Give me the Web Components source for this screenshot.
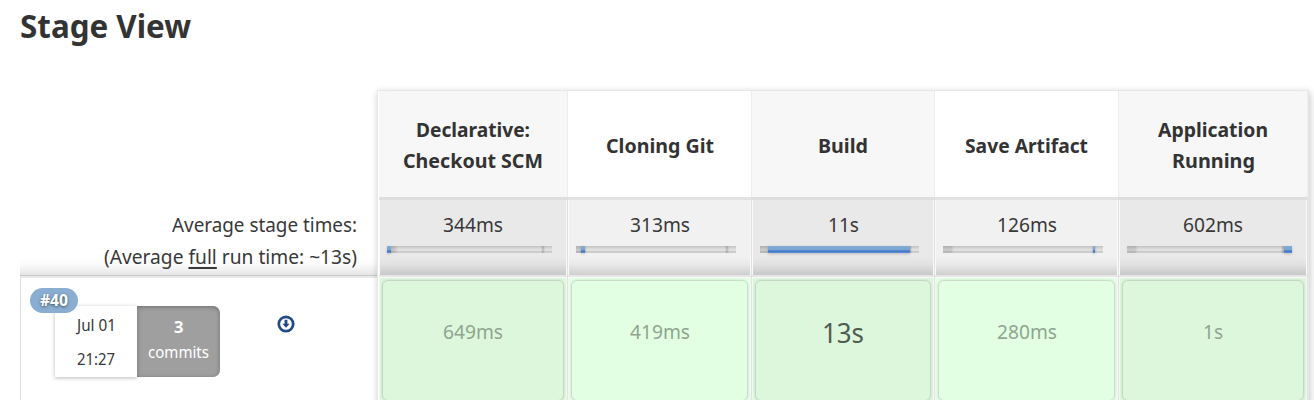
<!DOCTYPE html>
<html lang="en">
<head>
<meta charset="utf-8">
<title>Stage View</title>
<style>
html,body{margin:0;background:#fff;height:400px;overflow:hidden}
body{font-family:"Noto Sans","Open Sans",sans-serif;color:#383838}
</style>
</head>
<body>
<stage-view></stage-view>
<script>
const define = (name, html, setup) => {
  const tpl = document.createElement('template');
  tpl.innerHTML = html;
  customElements.define(name, class extends HTMLElement {
    constructor() {
      super();
      this.attachShadow({mode: 'open'}).appendChild(tpl.content.cloneNode(true));
    }
    connectedCallback() { if (setup) setup(this, this.shadowRoot); }
  });
};

// A single line of text condensed so that it takes the given width.
define('fit-text', `
<style>:host{display:block;white-space:nowrap}span{display:inline-block;transform-origin:0 50%}</style>
<span><slot></slot></span>`, (el, root) => {
  const span = root.querySelector('span');
  const target = parseFloat(el.getAttribute('w'));
  const natural = span.getBoundingClientRect().width;
  span.style.transform = 'scaleX(' + (target / natural).toFixed(4) + ')';
  el.style.width = target + 'px';
});

define('stage-header', `
<style>
:host{display:flex;flex-direction:column;justify-content:center;align-items:center;box-sizing:border-box;height:106px;
 padding-top:2px;border-right:1px solid #ededed;background:var(--head);color:#333;font-size:20px;line-height:31px;font-weight:700}
</style><slot></slot>`);

define('stage-average', `
<style>
:host{display:block;box-sizing:border-box;height:81px;border-top:3px solid var(--line);border-right:1px solid #dfdfdf;
 padding:0 1px 3px;background:linear-gradient(to bottom,#fafafa 75px,#e6e6e6 75px 77px,#fafafa 77px)}
.in{box-sizing:border-box;height:75px;padding:1px 0 0;background:linear-gradient(to bottom,transparent 56px,rgba(0,0,0,.03) 64px,rgba(0,0,0,.14) 75px),var(--avg);
 display:flex;flex-direction:column;align-items:center;font-size:20px;line-height:48px}
.bar{align-self:flex-start;margin:-3px 0 0 7px;width:var(--bw);height:7px;display:flex;
 background:linear-gradient(to right,rgba(0,0,0,.10) 0 8px,transparent 11px calc(100% - 11px),rgba(0,0,0,.18) calc(100% - 9px),transparent calc(100% - 7px)),
 linear-gradient(#bfbfbf,#d2d2d2 25%,#e2e2e2 55%,#dfdfdf 70%,#c9c9c9 75%,#cfcfcf)}
.bar i{display:block;margin-left:var(--from);width:var(--len);height:7px;box-shadow:0 1px 3px rgba(0,0,0,.2);
 background:linear-gradient(#82abd5 0,#79a4d4 60%,#3a70c6 68%,#477ccd 84%,#6498dd)}
</style>
<div class="in"><slot></slot><div class="bar"><i></i></div></div>`, (el) => {
  const [w, from, len] = el.getAttribute('bar').split(' ');
  el.style.setProperty('--bw', w + 'px');
  el.style.setProperty('--from', from + 'px');
  el.style.setProperty('--len', len + 'px');
});

define('stage-cell', `
<style>
:host{display:block;box-sizing:border-box;height:126px;border-right:1px solid #e3e3e3;padding:0 1px;background:#f5f5f5}
.pad{background:var(--ok);padding:2px;height:122px}
.in{box-sizing:border-box;height:121px;border:1px solid var(--edge);border-radius:6px;box-shadow:0 0 2px rgba(0,0,0,.16);
 display:flex;justify-content:center;font-size:20px;line-height:102px;color:#8fa58f}
:host([long]) .in{font-size:28px;color:#4f5c4f;line-height:103px}
</style>
<div class="pad"><div class="in"><slot></slot></div></div>`);

define('stage-column', `
<style>
:host{display:block;--head:#fff;--avg:#f1f1f1;--ok:#e3ffe3;--line:#e3e3e3;--edge:#cbdccb}
:host([odd]){--head:#f7f7f7;--avg:#e9e9e9;--ok:#ddf7dd;--line:#dedede;--edge:#c5d7c5}
</style><slot></slot>`);

define('run-badge', `
<style>
:host{position:absolute;left:-25px;top:-18px;width:48px;height:25px;border-radius:13px;background:#8aaed2;
 color:#fff;font-size:16px;font-weight:700;line-height:25px;display:flex;justify-content:center;text-shadow:0 1px 3px rgba(0,0,0,.55)}
</style><slot></slot>`);

define('down-icon', `
<style>:host{display:block;width:18px;height:18px}svg{display:block}</style>
<svg width="18" height="18" viewBox="0 0 18 18"><circle cx="9" cy="9" r="7.2" fill="#fff" stroke="#204a87" stroke-width="2.7"/>
<path d="M7.6 4.7h2.8v4.1h2.2L9 12.8 5.4 8.8h2.2z" fill="#204a87"/></svg>`);

define('run-summary', `
<style>
:host{display:flex;align-items:flex-start;box-sizing:border-box;height:125px;border-left:1px solid #dedede;padding:28px 0 0 34px}
.card{position:relative;display:flex;height:71px;font-size:16px}
.date{width:82px;background:#fff;box-shadow:0 1px 4px rgba(0,0,0,.28);display:flex;flex-direction:column;align-items:center;line-height:34px;padding-top:2px;box-sizing:border-box}
.commits{width:83px;box-sizing:border-box;background:#9f9f9f;color:#fff;border-radius:0 7px 7px 0;box-shadow:inset 0 1px 4px rgba(0,0,0,.3);
 display:flex;flex-direction:column;align-items:center;padding-top:9px;line-height:25px;position:relative}
.n{font-weight:700}
down-icon{margin:9px 0 0 57px}
</style>
<div class="card">
 <div class="date"><fit-text w="39">Jul 01</fit-text><fit-text w="38">21:27</fit-text></div>
 <div class="commits"><fit-text class="n" w="9.5">3</fit-text><fit-text w="61">commits</fit-text></div>
 <run-badge><fit-text w="28">#40</fit-text></run-badge>
</div>
<down-icon></down-icon>`);

define('run-side', `
<style>
:host{display:block;width:357px;padding-top:103px}
.avg{box-sizing:border-box;height:86px;padding:19px 20px 0 0;display:flex;flex-direction:column;align-items:flex-end;font-size:20px;line-height:32px;
 border-bottom:1px solid #c8c8c8;background:linear-gradient(to bottom,transparent 68px,rgba(0,0,0,.02) 75px,rgba(0,0,0,.1) 85px)}
.gap{height:2px;background:#e9e9e9}
u{text-decoration-thickness:1.5px;text-underline-offset:3px}
</style>
<div class="avg"><fit-text w="185">Average stage times:</fit-text><fit-text w="253">(Average <u>full</u> run time: ~13s)</fit-text></div>
<div class="gap"></div>
<run-summary></run-summary>`);

define('stage-table', `
<style>
:host{display:grid;grid-template-columns:189px 184px 183px 184px 189px;box-sizing:border-box;height:320px;border:1px solid #e8e8e8;border-width:1px 1px 0;padding-left:1px;background:#fff;
 box-shadow:1px 2px 7px rgba(0,0,0,.22)}
</style><slot></slot>`);

define('stage-view', `
<style>
:host{display:block;height:400px;overflow:hidden;padding-left:20px;box-sizing:border-box}
h2{margin:0;height:87px;font-size:33px;line-height:52px;font-weight:700;color:#333}
.body{display:flex;align-items:flex-start}
stage-table{margin-top:3px}
</style>
<h2><fit-text w="171">Stage View</fit-text></h2>
<div class="body">
<run-side></run-side>
<stage-table>
 <stage-column odd>
  <stage-header><fit-text w="114">Declarative:</fit-text><fit-text w="140">Checkout SCM</fit-text></stage-header>
  <stage-average bar="165 0 4"><fit-text w="60">344ms</fit-text></stage-average>
  <stage-cell><fit-text w="60">649ms</fit-text></stage-cell>
 </stage-column>
 <stage-column>
  <stage-header><fit-text w="108">Cloning Git</fit-text></stage-header>
  <stage-average bar="160 5 4"><fit-text w="60">313ms</fit-text></stage-average>
  <stage-cell><fit-text w="60">419ms</fit-text></stage-cell>
 </stage-column>
 <stage-column odd>
  <stage-header><fit-text w="50">Build</fit-text></stage-header>
  <stage-average bar="159 8 142"><fit-text w="31">11s</fit-text></stage-average>
  <stage-cell long><fit-text w="42">13s</fit-text></stage-cell>
 </stage-column>
 <stage-column>
  <stage-header><fit-text w="123">Save Artifact</fit-text></stage-header>
  <stage-average bar="160 150 2"><fit-text w="60">126ms</fit-text></stage-average>
  <stage-cell><fit-text w="60">280ms</fit-text></stage-cell>
 </stage-column>
 <stage-column odd>
  <stage-header><fit-text w="110">Application</fit-text><fit-text w="83">Running</fit-text></stage-header>
  <stage-average bar="165 157 8"><fit-text w="60">602ms</fit-text></stage-average>
  <stage-cell><fit-text w="20">1s</fit-text></stage-cell>
 </stage-column>
</stage-table>
</div>`);
</script>
</body>
</html>
